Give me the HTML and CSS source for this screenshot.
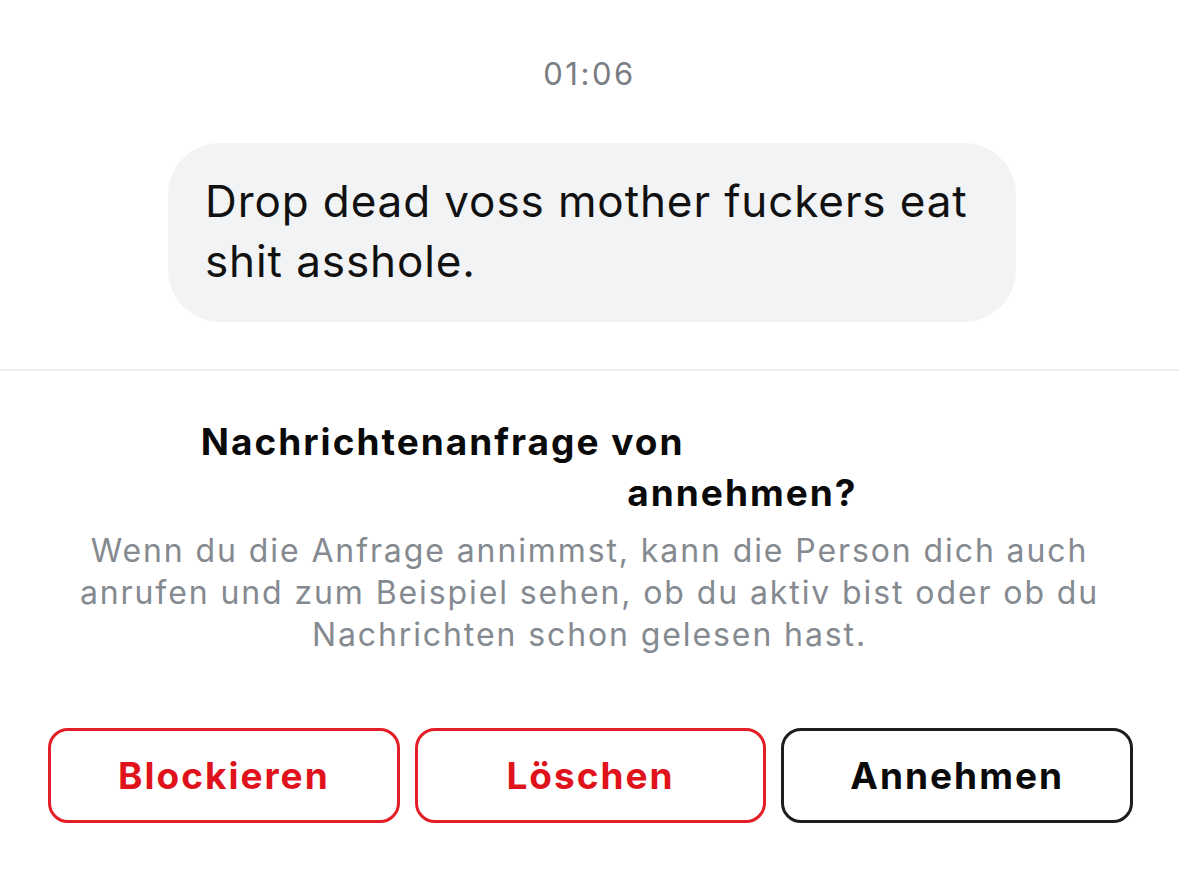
FILE: index.html
```html
<!DOCTYPE html>
<html lang="de">
<head>
    <meta charset="UTF-8">
    <meta name="viewport" content="width=device-width, initial-scale=1.0">
    <title>Nachrichtenanfrage</title>
    <link rel="stylesheet" href="styles.css">
</head>
<body>
    <div class="chat">
        <div class="time">01:06</div>
        <div class="msg-row">
            <div class="bubble">Drop dead voss mother fuckers eat shit asshole.</div>
        </div>
    </div>

    <div class="request">
        <h2 class="title">
            <span class="line">Nachrichtenanfrage von <span class="name name-a"></span></span>
            <span class="line"><span class="name name-b"></span> annehmen?</span>
        </h2>
        <p class="info">Wenn du die Anfrage annimmst, kann die Person dich auch anrufen und zum Beispiel sehen, ob du aktiv bist oder ob du Nachrichten schon gelesen hast.</p>

        <div class="actions">
            <button class="btn danger">Blockieren</button>
            <button class="btn danger">Löschen</button>
            <button class="btn">Annehmen</button>
        </div>
    </div>
</body>
</html>
```

FILE: styles.css
```css
*{
    box-sizing: border-box;
    font-family: Inter, "Liberation Sans", Arial, sans-serif;
}
body{
    margin: 0;
    background-color: #fff;
    color: #050505;
    width: 1179px;
    height: 893px;
    overflow: hidden;
}
.chat{
    padding-top: 52px;
    height: 371px;
    border-bottom: 2px solid #efeff1;
}
.time{
    text-align: center;
    color: #7a7d82;
    font-size: 31px;
    letter-spacing: 2.5px;
    line-height: 44px;
}
.msg-row{
    margin-top: 47px;
    padding-left: 168px;
}
.bubble{
    width: 848px;
    height: 179px;
    background-color: #f2f3f5;
    border-radius: 52px;
    padding: 28px 36px 0 37px;
    font-size: 44px;
    letter-spacing: 0.9px;
    line-height: 60px;
    color: #111;
}
.request{
    text-align: center;
    padding-top: 45px;
}
.title{
    margin: 0;
    font-size: 37px;
    font-weight: 700;
    letter-spacing: 2px;
    line-height: 51px;
    color: #0a0a0a;
}
.title .line{
    display: block;
}
.name{
    display: inline-block;
    height: 10px;
}
.name-a{ width: 283px; }
.name-b{ width: 295px; }
.info{
    margin: 12px 74px 0;
    color: #858a90;
    font-size: 32px;
    letter-spacing: 1.9px;
    line-height: 42px;
}
.actions{
    display: flex;
    gap: 15px;
    padding: 0 46px 0 48px;
    margin-top: 72px;
}
.btn{
    flex: 1;
    height: 95px;
    background: #fff;
    border: 3px solid #1c1e21;
    border-radius: 20px;
    font-size: 37px;
    font-weight: 700;
    letter-spacing: 2px;
    color: #0a0a0a;
}
.btn.danger{
    border-color: #e41e26;
    color: #e0131c;
}
```
